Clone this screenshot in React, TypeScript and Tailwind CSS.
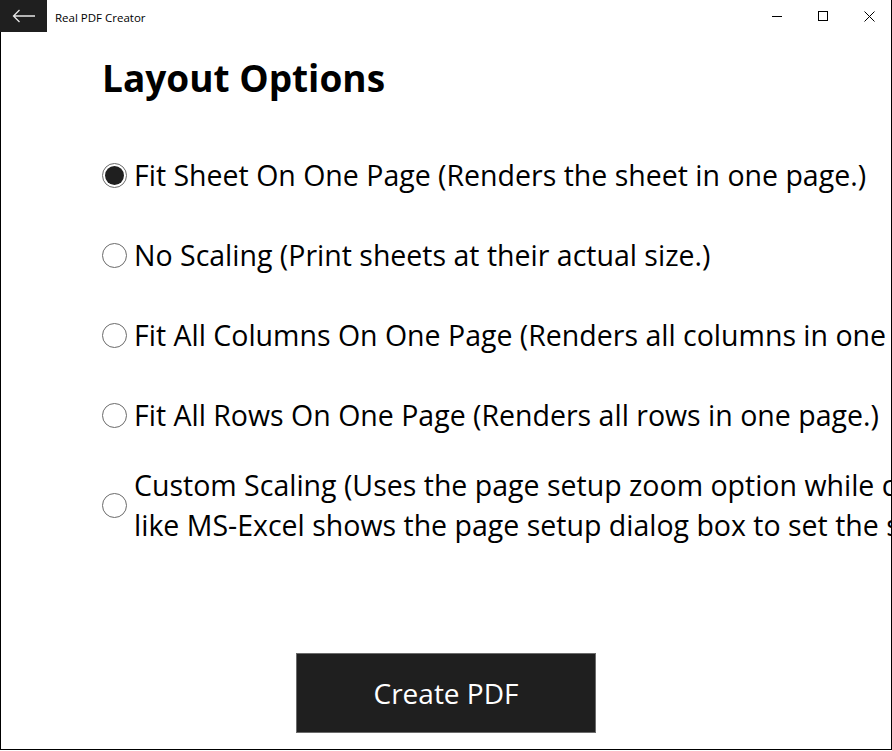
import { useState } from "react";

const OPTIONS = [
  { id: "fit_sheet", lines: ["Fit Sheet On One Page (Renders the sheet in one page.)"] },
  { id: "no_scaling", lines: ["No Scaling (Print sheets at their actual size.)"] },
  { id: "fit_columns", lines: ["Fit All Columns On One Page (Renders all columns in one page.)"] },
  { id: "fit_rows", lines: ["Fit All Rows On One Page (Renders all rows in one page.)"] },
  {
    id: "custom",
    lines: [
      "Custom Scaling (Uses the page setup zoom option while converting. Application",
      "like MS-Excel shows the page setup dialog box to set the scaling value.)",
    ],
  },
];

function Radio({ checked }: { checked: boolean }) {
  return (
    <span className="flex h-[25px] w-[25px] shrink-0 items-center justify-center rounded-full border border-[#6b6b6b] bg-white">
      {checked && <span className="h-[19px] w-[19px] rounded-full bg-[#1f1f1f]" />}
    </span>
  );
}

export default function App() {
  const [selected, setSelected] = useState("fit_sheet");

  return (
    <div
      className="relative flex h-[751px] w-[892px] flex-col overflow-hidden bg-white text-black"
      style={{ fontFamily: '"Segoe UI", "Open Sans", "Noto Sans", sans-serif' }}
    >
      {/* title bar */}
      <div className="flex h-8 shrink-0 items-center">
        <button className="flex h-8 w-[47px] items-center justify-center bg-[#1f1f1f]">
          <svg width="24" height="14" viewBox="0 0 24 14" fill="none" stroke="#e6e6e6" strokeWidth="1.3">
            <path d="M23 7H1.5M7.5 1L1.5 7l6 6" />
          </svg>
        </button>
        <span className="ml-2 pt-[3px] text-[11.5px]">Real PDF Creator</span>
        <div className="ml-auto flex h-8 items-center">
          <div className="flex h-8 w-[46px] items-center justify-center">
            <svg width="10" height="10" viewBox="0 0 10 10" stroke="#000" strokeWidth="1">
              <path d="M0 5.5h10" />
            </svg>
          </div>
          <div className="flex h-8 w-[46px] items-center justify-center">
            <svg width="10" height="10" viewBox="0 0 10 10" fill="none" stroke="#000" strokeWidth="1">
              <rect x="0.5" y="0.5" width="9" height="9" />
            </svg>
          </div>
          <div className="flex h-8 w-[46px] items-center justify-center">
            <svg width="11" height="11" viewBox="0 0 11 11" stroke="#000" strokeWidth="1">
              <path d="M0.5 0.5l10 10M10.5 0.5l-10 10" />
            </svg>
          </div>
        </div>
      </div>

      {/* content */}
      <div className="flex flex-1 flex-col pl-[102px]">
        <h1 className="mt-[22px] h-[81px] text-[37px] font-bold leading-[48px]">Layout Options</h1>
        <div className="flex flex-col">
          {OPTIONS.map((opt) => (
            <label
              key={opt.id}
              onClick={() => setSelected(opt.id)}
              className={`flex cursor-pointer items-center gap-[7px] ${opt.lines.length > 1 ? "mt-[10px]" : "h-20"}`}
            >
              <Radio checked={selected === opt.id} />
              <span className="flex flex-col whitespace-nowrap text-[28.5px] leading-[40px]">
                {opt.lines.map((l) => (
                  <span key={l}>{l}</span>
                ))}
              </span>
            </label>
          ))}
        </div>
        <div className="flex-1" />
      </div>

      <div className="flex shrink-0 justify-center pb-[18px]">
        <button className="flex h-20 w-[300px] items-center justify-center border border-[#6b6b6b] bg-[#1f1f1f] text-[28px] text-white">
          Create PDF
        </button>
      </div>

      {/* window frame */}
      <div className="pointer-events-none absolute bottom-[1px] left-0 top-8 w-px bg-black" />
      <div className="pointer-events-none absolute bottom-[1px] right-0 top-0 w-px bg-black" />
      <div className="pointer-events-none absolute bottom-[1px] left-0 right-0 h-px bg-black" />
    </div>
  );
}
